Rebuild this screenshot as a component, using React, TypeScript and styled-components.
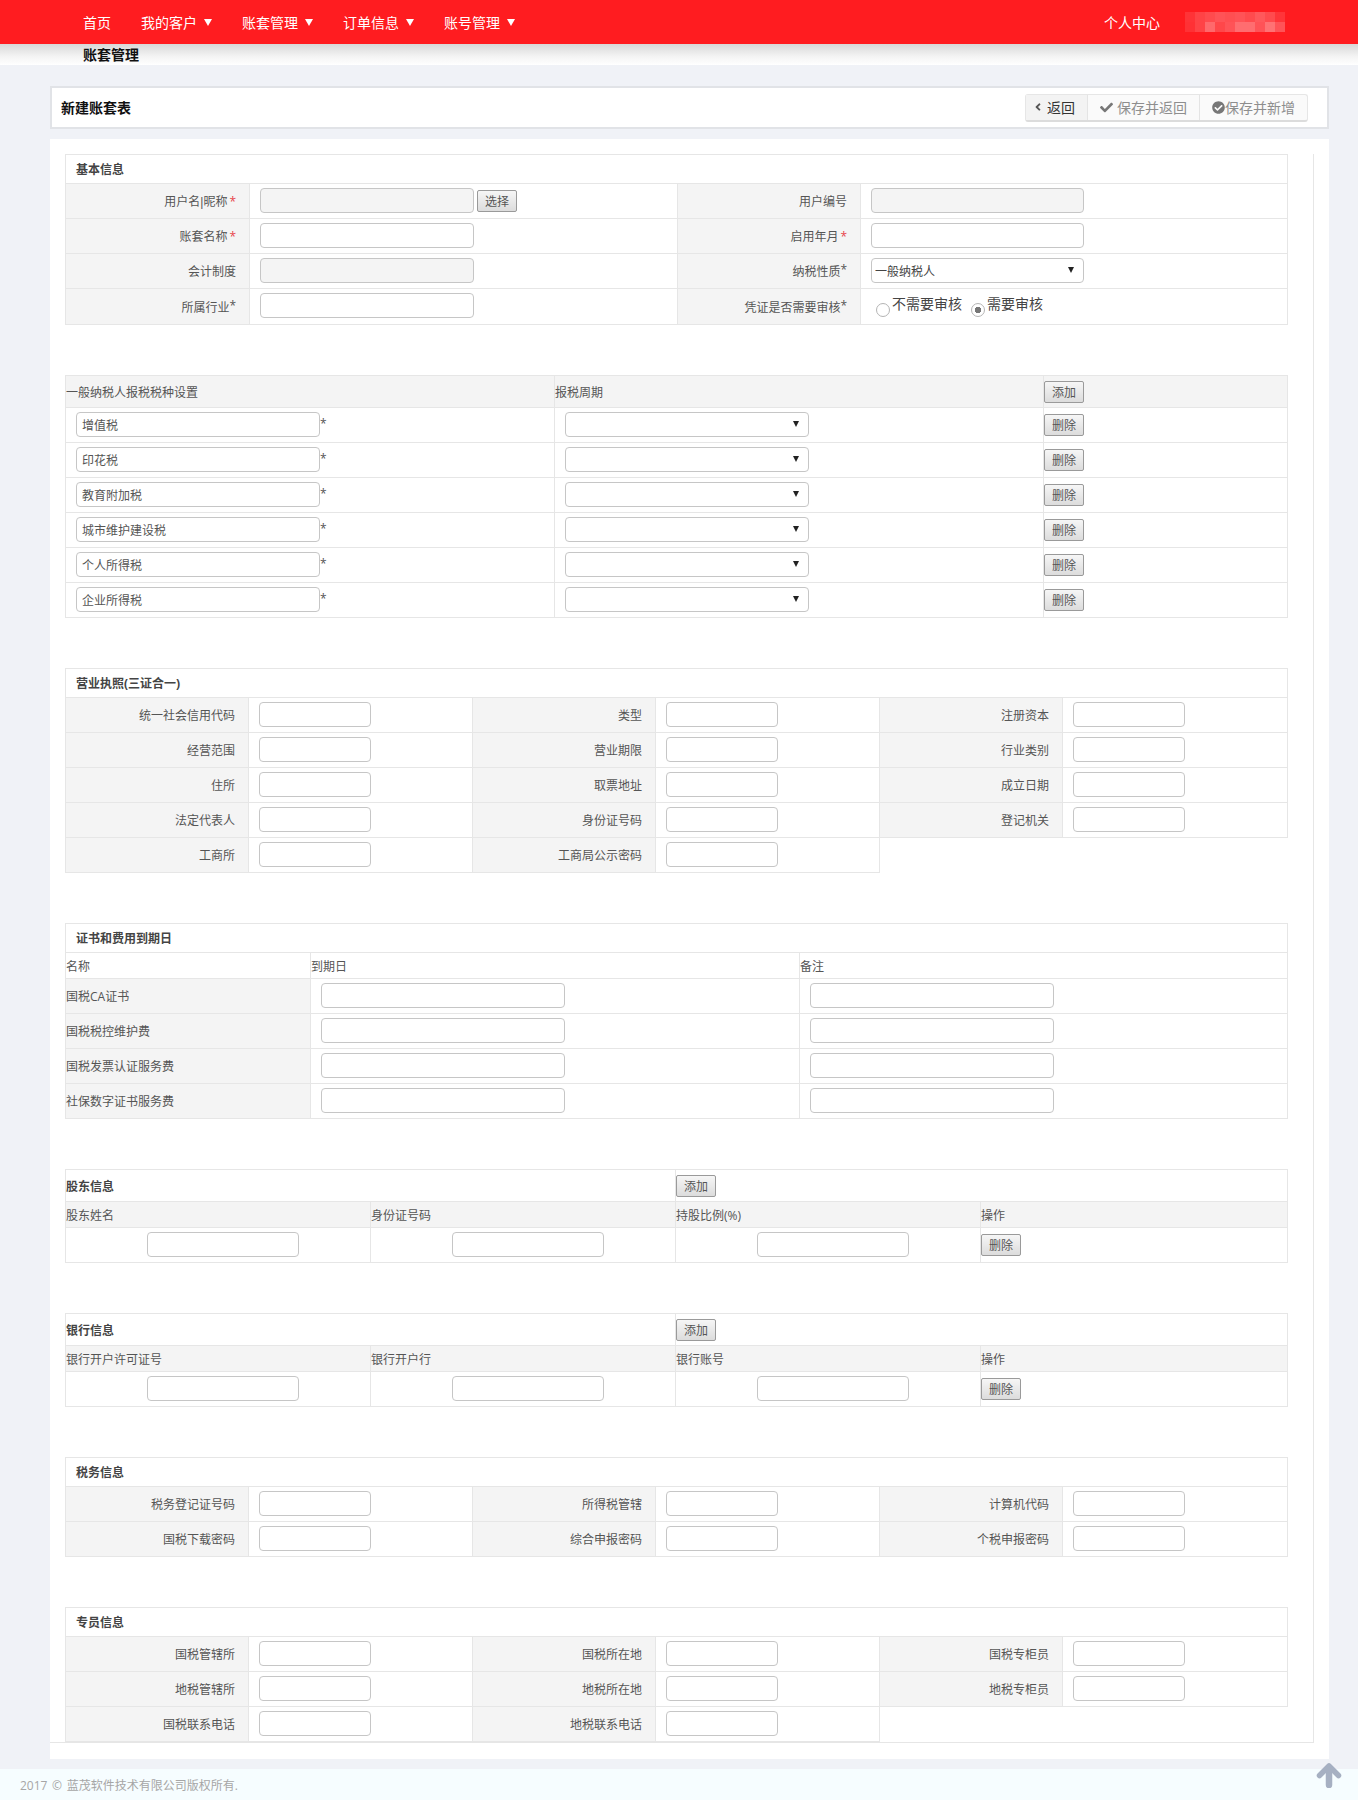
import React from "react";
import styled, { createGlobalStyle } from "styled-components";
import { FaAngleLeft, FaCheck, FaCheckCircle } from "react-icons/fa";

const FONT = `"Open Sans", "Noto Sans CJK SC", sans-serif`;

const navItems = ["我的客户", "账套管理", "订单信息", "账号管理"];
const taxItems = ["增值税", "印花税", "教育附加税", "城市维护建设税", "个人所得税", "企业所得税"];
const certItems = ["国税CA证书", "国税税控维护费", "国税发票认证服务费", "社保数字证书服务费"];

const licenseRows = [
  ["统一社会信用代码", "类型", "注册资本"],
  ["经营范围", "营业期限", "行业类别"],
  ["住所", "取票地址", "成立日期"],
  ["法定代表人", "身份证号码", "登记机关"],
  ["工商所", "工商局公示密码"],
];
const taxInfoRows = [
  ["税务登记证号码", "所得税管辖", "计算机代码"],
  ["国税下载密码", "综合申报密码", "个税申报密码"],
];
const officerRows = [
  ["国税管辖所", "国税所在地", "国税专柜员"],
  ["地税管辖所", "地税所在地", "地税专柜员"],
  ["国税联系电话", "地税联系电话"],
];

const mosaic = [0.05, 0.12, 0.16, 0.2, 0.18, 0.2, 0.16, 0.22, 0.16, 0.06, 0.04, 0.12, 0.3, 0.14, 0.2, 0.32, 0.32, 0.2, 0.34, 0.2];

const GlobalStyle = createGlobalStyle`
  html, body {
    margin: 0;
    padding: 0;
    background: #f0f2f7;
    font-family: ${FONT};
    font-size: 12px;
    color: #555;
  }
  * {
    box-sizing: border-box;
  }
`;

const NavBar = styled.div`
  display: flex;
  align-items: center;
  height: 44px;
  padding: 0 73px 0 68px;
  background: #ff1c20;
  color: #fff;
  font-size: 14px;
`;

const NavItem = styled.div`
  display: flex;
  align-items: center;
  padding: 0 15px;
`;

const NavCaret = styled.span`
  width: 0;
  height: 0;
  margin-left: 7px;
  border-left: 4px solid transparent;
  border-right: 4px solid transparent;
  border-top: 7px solid #fff;
`;

const NavRight = styled.div`
  display: flex;
  align-items: center;
  gap: 25px;
  margin-left: auto;
`;

const SubBar = styled.div`
  height: 21px;
  padding-left: 83px;
  background: linear-gradient(#d8d8d8, #f4f4f4 60%, #fff);
  color: #111;
  font-size: 14px;
  font-weight: 700;
  line-height: 21px;
`;

const Main = styled.div`
  margin: 21px 29px 10px 50px;
`;

const HeadPanel = styled.div`
  display: flex;
  align-items: center;
  justify-content: space-between;
  height: 43px;
  margin-bottom: 10px;
  padding: 0 19px 0 9px;
  border: 2px solid #e1e3e7;
  background: #fff;
`;

const HeadTitle = styled.div`
  margin-top: -2px;
  color: #111;
  font-size: 14px;
  font-weight: 700;
`;

const BtnGroup = styled.div`
  display: flex;
  height: 28px;
  border: 1px solid #e6e6e6;
  border-bottom: 2px solid #dcdcdc;
  border-radius: 3px;
  background: #fafafa;
`;

const GroupBtn = styled.button`
  display: flex;
  align-items: center;
  gap: 4px;
  padding: 0 12px;
  border: 0;
  border-left: 1px solid #e4e4e4;
  background: transparent;
  color: #8e8e8e;
  font-family: ${FONT};
  font-size: 14px;
  svg {
    color: #777;
  }
`;

const BackBtn = styled(GroupBtn)`
  gap: 3px;
  padding: 0 12px 0 6px;
  border-left: 0;
  background: #f3f3f3;
  color: #333;
  svg {
    color: #555;
  }
`;

const TightBtn = styled(GroupBtn)`
  gap: 0;
`;

const Content = styled.div`
  padding: 15px 15px 16px 0;
  background: #fff;
`;

const Frame = styled.div`
  padding: 0 25px 0 15px;
  border-right: 1px solid #e6e6e6;
  border-bottom: 1px solid #e6e6e6;
`;

const Table = styled.table`
  width: 1222px;
  margin-bottom: 50px;
  border-collapse: collapse;
  table-layout: fixed;
  background: #fff;
  &:last-child {
    margin-bottom: 0;
  }
`;

const Row = styled.tr<{ $h?: number }>`
  height: ${(p) => p.$h || 35}px;
`;

const Cell = styled.td<{ $center?: boolean }>`
  padding: 0 0 2px 10px;
  border: 1px solid #e6e6e6;
  text-align: ${(p) => (p.$center ? "center" : "left")};
  vertical-align: middle;
`;

const Label = styled.td`
  padding: 0 13px 0 0;
  border: 1px solid #e6e6e6;
  background: #f4f4f4;
  text-align: right;
  vertical-align: middle;
`;

const TitleCell = styled.td<{ $flush?: boolean }>`
  padding: 0 0 0 ${(p) => (p.$flush ? "0" : "10px")};
  border: 1px solid #e6e6e6;
  color: #444;
  font-weight: 700;
`;

const HeadCell = styled.td<{ $shade?: boolean }>`
  padding: 0;
  border: 1px solid #e6e6e6;
  background: ${(p) => (p.$shade ? "#f4f4f4" : "#fff")};
`;

const NameCell = styled.td`
  padding: 0;
  border: 1px solid #e6e6e6;
  background: #f4f4f4;
`;

const PlainCell = styled.td`
  padding: 0;
  border: 1px solid #e6e6e6;
`;

const TaxBtnCell = styled(PlainCell)`
  padding-bottom: 1px;
`;

const Input = styled.input<{ $w: number }>`
  width: ${(p) => p.$w}px;
  height: 25px;
  padding: 2px 5px 0;
  border: 1px solid #c6c6c6;
  border-radius: 4px;
  outline: 0;
  background: ${(p) => (p.disabled ? "#f4f4f4" : "#fff")};
  color: #555;
  font-family: ${FONT};
  font-size: 12px;
  vertical-align: top;
`;

const SelectBox = styled.span<{ $w: number }>`
  position: relative;
  display: inline-block;
  width: ${(p) => p.$w}px;
  height: 25px;
  vertical-align: top;
  &::after {
    content: "";
    position: absolute;
    top: 9px;
    right: 10px;
    border-left: 3px solid transparent;
    border-right: 3px solid transparent;
    border-top: 6px solid #222;
    pointer-events: none;
  }
`;

const Select = styled.select`
  display: block;
  width: 100%;
  height: 25px;
  padding: 2px 3px 0;
  border: 1px solid #c6c6c6;
  border-radius: 4px;
  outline: 0;
  background: #fff;
  color: #444;
  font-family: ${FONT};
  font-size: 12px;
  appearance: none;
`;

const GreyBtn = styled.button`
  width: 40px;
  height: 22px;
  padding: 0;
  border: 1px solid #9a9a9a;
  border-radius: 2px;
  background: linear-gradient(#f6f6f6, #dcdcdc);
  color: #555;
  font-family: ${FONT};
  font-size: 12px;
  vertical-align: middle;
`;

const PickBtn = styled(GreyBtn)`
  margin: 2px 0 0 3px;
  vertical-align: top;
`;

const Pipe = styled.span`
  font-family: "Liberation Sans", sans-serif;
`;

const Req = styled.span`
  margin-left: 2px;
  color: #e8434a;
`;

const Star = styled.span`
  position: relative;
  top: -2px;
  color: #555;
`;

const FieldStar = styled.span`
  display: inline-block;
  margin-top: 3px;
  color: #555;
  line-height: 17px;
  vertical-align: top;
`;

const RadioRow = styled.div`
  display: flex;
  padding-left: 5px;
`;

const RadioLabel = styled.label`
  display: flex;
  align-items: flex-start;
  margin-right: 9px;
  color: #444;
  font-size: 14px;
  line-height: 19px;
`;

const Radio = styled.input`
  width: 14px;
  height: 14px;
  margin: 9px 2px 0 0;
  border: 1px solid #b4b4b4;
  border-radius: 50%;
  background: #fff;
  appearance: none;
  &:checked {
    background: radial-gradient(circle, #777 0, #777 3px, #fff 3.5px);
  }
`;

const Footer = styled.div`
  position: relative;
  display: flex;
  align-items: center;
  height: 32px;
  padding-left: 20px;
  background: #f6fdff;
  color: #a6a6a6;
  word-spacing: 1.5px;
`;

const TopArrow = styled.svg`
  position: absolute;
  top: -6px;
  right: 16px;
  width: 26px;
  height: 25px;
`;

function Mosaic() {
  return (
    <svg width="100" height="20" viewBox="0 0 100 20">
      <rect width="100" height="20" fill="#fff" opacity="0.06" />
      {mosaic.map((a, i) => (
        <rect key={i} x={(i % 10) * 10} y={Math.floor(i / 10) * 10} width="10" height="10" fill="#fff" opacity={a} />
      ))}
    </svg>
  );
}

// three pairs of label and input, the form used by the licence, tax and officer tables
function TripleTable({ title, rows }: { title: string; rows: string[][] }) {
  return (
    <Table>
      <colgroup>
        <col width="183" />
        <col width="224" />
        <col width="183" />
        <col width="224" />
        <col width="183" />
        <col width="225" />
      </colgroup>
      <tbody>
        <Row $h={29}>
          <TitleCell colSpan={6}>{title}</TitleCell>
        </Row>
        {rows.map((row) => (
          <Row key={row[0]}>
            {row.map((label) => (
              <React.Fragment key={label}>
                <Label>{label}</Label>
                <Cell>
                  <Input $w={112} />
                </Cell>
              </React.Fragment>
            ))}
          </Row>
        ))}
      </tbody>
    </Table>
  );
}

function FourColTable({ title, heads }: { title: string; heads: string[] }) {
  return (
    <Table>
      <colgroup>
        <col width="305" />
        <col width="305" />
        <col width="305" />
        <col width="307" />
      </colgroup>
      <tbody>
        <Row $h={32}>
          <TitleCell colSpan={2} $flush>
            {title}
          </TitleCell>
          <PlainCell colSpan={2}>
            <GreyBtn>添加</GreyBtn>
          </PlainCell>
        </Row>
        <Row $h={26}>
          {heads.map((h) => (
            <HeadCell key={h} $shade>
              {h}
            </HeadCell>
          ))}
        </Row>
        <Row>
          <Cell $center>
            <Input $w={152} />
          </Cell>
          <Cell $center>
            <Input $w={152} />
          </Cell>
          <Cell $center>
            <Input $w={152} />
          </Cell>
          <PlainCell>
            <GreyBtn>删除</GreyBtn>
          </PlainCell>
        </Row>
      </tbody>
    </Table>
  );
}

export default function App() {
  return (
    <>
      <GlobalStyle />
      <NavBar>
        <NavItem>首页</NavItem>
        {navItems.map((item) => (
          <NavItem key={item}>
            {item}
            <NavCaret />
          </NavItem>
        ))}
        <NavRight>
          <span>个人中心</span>
          <Mosaic />
        </NavRight>
      </NavBar>
      <SubBar>账套管理</SubBar>

      <Main>
        <HeadPanel>
          <HeadTitle>新建账套表</HeadTitle>
          <BtnGroup>
            <BackBtn>
              <FaAngleLeft size={12} />
              返回
            </BackBtn>
            <GroupBtn>
              <FaCheck size={13} />
              保存并返回
            </GroupBtn>
            <TightBtn>
              <FaCheckCircle size={13} />
              保存并新增
            </TightBtn>
          </BtnGroup>
        </HeadPanel>

        <Content>
          <Frame>
            <Table>
              <colgroup>
                <col width="184" />
                <col width="428" />
                <col width="183" />
                <col width="427" />
              </colgroup>
              <tbody>
                <Row $h={29}>
                  <TitleCell colSpan={4}>基本信息</TitleCell>
                </Row>
                <Row>
                  <Label>
                    用户名<Pipe>|</Pipe>昵称<Req>*</Req>
                  </Label>
                  <Cell>
                    <Input $w={214} disabled />
                    <PickBtn>选择</PickBtn>
                  </Cell>
                  <Label>用户编号</Label>
                  <Cell>
                    <Input $w={213} disabled />
                  </Cell>
                </Row>
                <Row>
                  <Label>
                    账套名称<Req>*</Req>
                  </Label>
                  <Cell>
                    <Input $w={214} />
                  </Cell>
                  <Label>
                    启用年月<Req>*</Req>
                  </Label>
                  <Cell>
                    <Input $w={213} />
                  </Cell>
                </Row>
                <Row>
                  <Label>会计制度</Label>
                  <Cell>
                    <Input $w={214} disabled />
                  </Cell>
                  <Label>
                    纳税性质<Star>*</Star>
                  </Label>
                  <Cell>
                    <SelectBox $w={213}>
                      <Select defaultValue="一般纳税人">
                        <option>一般纳税人</option>
                        <option>小规模纳税人</option>
                      </Select>
                    </SelectBox>
                  </Cell>
                </Row>
                <Row $h={36}>
                  <Label>
                    所属行业<Star>*</Star>
                  </Label>
                  <Cell>
                    <Input $w={214} />
                  </Cell>
                  <Label>
                    凭证是否需要审核<Star>*</Star>
                  </Label>
                  <Cell>
                    <RadioRow>
                      <RadioLabel>
                        <Radio type="radio" name="audit" />
                        不需要审核
                      </RadioLabel>
                      <RadioLabel>
                        <Radio type="radio" name="audit" defaultChecked />
                        需要审核
                      </RadioLabel>
                    </RadioRow>
                  </Cell>
                </Row>
              </tbody>
            </Table>

            <Table>
              <colgroup>
                <col width="489" />
                <col width="489" />
                <col width="244" />
              </colgroup>
              <tbody>
                <Row $h={32}>
                  <HeadCell $shade>一般纳税人报税税种设置</HeadCell>
                  <HeadCell $shade>报税周期</HeadCell>
                  <HeadCell $shade>
                    <GreyBtn>添加</GreyBtn>
                  </HeadCell>
                </Row>
                {taxItems.map((tax) => (
                  <Row key={tax}>
                    <Cell>
                      <Input $w={244} defaultValue={tax} />
                      <FieldStar>*</FieldStar>
                    </Cell>
                    <Cell>
                      <SelectBox $w={244}>
                        <Select />
                      </SelectBox>
                    </Cell>
                    <TaxBtnCell>
                      <GreyBtn>删除</GreyBtn>
                    </TaxBtnCell>
                  </Row>
                ))}
              </tbody>
            </Table>

            <TripleTable title="营业执照(三证合一)" rows={licenseRows} />

            <Table>
              <colgroup>
                <col width="245" />
                <col width="489" />
                <col width="488" />
              </colgroup>
              <tbody>
                <Row $h={29}>
                  <TitleCell colSpan={3}>证书和费用到期日</TitleCell>
                </Row>
                <Row $h={26}>
                  <HeadCell>名称</HeadCell>
                  <HeadCell>到期日</HeadCell>
                  <HeadCell>备注</HeadCell>
                </Row>
                {certItems.map((cert) => (
                  <Row key={cert}>
                    <NameCell>{cert}</NameCell>
                    <Cell>
                      <Input $w={244} />
                    </Cell>
                    <Cell>
                      <Input $w={244} />
                    </Cell>
                  </Row>
                ))}
              </tbody>
            </Table>

            <FourColTable title="股东信息" heads={["股东姓名", "身份证号码", "持股比例(%)", "操作"]} />
            <FourColTable title="银行信息" heads={["银行开户许可证号", "银行开户行", "银行账号", "操作"]} />
            <TripleTable title="税务信息" rows={taxInfoRows} />
            <TripleTable title="专员信息" rows={officerRows} />
          </Frame>
        </Content>
      </Main>

      <Footer>
        2017 © 蓝茂软件技术有限公司版权所有.
        <TopArrow viewBox="0 0 26 25">
          <path d="M3.5 12.5 13 3l9.5 9.5" fill="none" stroke="#a6b0c2" strokeWidth="5.5" strokeLinecap="round" strokeLinejoin="round" />
          <path d="M13 5v17" fill="none" stroke="#a6b0c2" strokeWidth="6.5" strokeLinecap="round" />
        </TopArrow>
      </Footer>
    </>
  );
}
